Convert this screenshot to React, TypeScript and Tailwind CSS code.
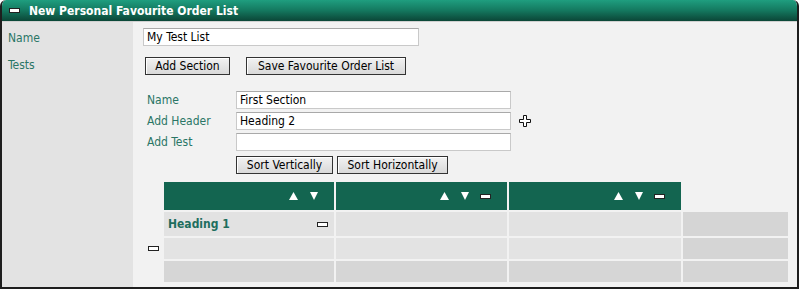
const font = "font-['DejaVu_Sans_Condensed','DejaVu_Sans',sans-serif]";

function MinusBox() {
  return <span className="inline-block h-[5px] w-[11px] border border-[#222] bg-white" />;
}

function Arrows({ minus }: { minus?: boolean }) {
  return (
    <div className="flex items-center pr-[16px]">
      <svg width="9" height="8" viewBox="0 0 9 8">
        <polygon points="4.5,0 9,8 0,8" fill="#fff" />
      </svg>
      <svg width="8" height="8" viewBox="0 0 8 8" className="ml-[12px]">
        <polygon points="0,0 8,0 4,8" fill="#fff" />
      </svg>
      {minus && (
        <span className="ml-[11px] flex">
          <MinusBox />
        </span>
      )}
    </div>
  );
}

function PlusIcon() {
  return (
    <svg width="12" height="12" viewBox="0 0 12 12" className="ml-[8px]">
      <path
        d="M4.5 0.5 H7.5 V4.5 H11.5 V7.5 H7.5 V11.5 H4.5 V7.5 H0.5 V4.5 H4.5 Z"
        fill="#fff"
        stroke="#111"
        strokeWidth="1"
      />
    </svg>
  );
}

function Input({ value, w }: { value: string; w: string }) {
  return (
    <div
      className={`${w} h-[18px] border border-[#c9c9c9] border-t-[#a9a9a9] bg-white pl-[3px] text-[12px] leading-[16px] text-black`}
    >
      {value}
    </div>
  );
}

function Button({ label, w }: { label: string; w: string }) {
  return (
    <div
      className={`${w} flex h-[18px] items-center justify-center border border-[#333] bg-gradient-to-b from-[#f2f2f2] to-[#d9d9d9] text-[12px] text-black shadow-[inset_1px_1px_0_#fff]`}
    >
      {label}
    </div>
  );
}

export default function App() {
  return (
    <div className={`${font} h-[290px] w-[799px] bg-white`}>
      <div className="flex h-[289px] w-[799px] flex-col overflow-hidden rounded-t-[6px] border-x-2 border-b-2 border-[#1e1e1e]">
        {/* title bar */}
        <div className="flex h-[22px] items-center gap-[9px] border-b border-[#d0d0d0] bg-gradient-to-b from-[#1f9e7f] via-[#14785f] to-[#0b4637] pl-[7px]">
          <span className="inline-block h-[5px] w-[11px] border border-[#222] bg-white" />
          <span className="text-[12px] font-bold text-white">New Personal Favourite Order List</span>
        </div>

        <div className="flex flex-1">
          {/* labels column */}
          <div className="w-[131px] bg-[#e3e3e3] pl-[6px] pt-[8px] text-[12px] text-[#2a7666]">
            <div className="h-[27px] leading-[16px]">Name</div>
            <div className="leading-[16px]">Tests</div>
          </div>

          {/* content */}
          <div className="flex-1 bg-[#f2f2f2] pl-[10px] pt-[6px]">
            <Input value="My Test List" w="w-[276px]" />
            <div className="mt-[11px] flex gap-[16px] pl-[2px]">
              <Button label="Add Section" w="w-[85px]" />
              <Button label="Save Favourite Order List" w="w-[160px]" />
            </div>

            <div className="mt-[16px] flex flex-col gap-[3px] pl-[4px] text-[12px] text-[#2a7666]">
              <div className="flex items-center">
                <span className="w-[89px]">Name</span>
                <Input value="First Section" w="w-[275px]" />
              </div>
              <div className="flex items-center">
                <span className="w-[89px]">Add Header</span>
                <Input value="Heading 2" w="w-[275px]" />
                <PlusIcon />
              </div>
              <div className="flex items-center">
                <span className="w-[89px]">Add Test</span>
                <Input value="" w="w-[275px]" />
              </div>
              <div className="mt-[2px] flex gap-[4px] pl-[89px]">
                <Button label="Sort Vertically" w="w-[97px]" />
                <Button label="Sort Horizontally" w="w-[111px]" />
              </div>
            </div>

            <div className="mt-[8px] flex">
              <div className="flex w-[21px] flex-col justify-center pl-[5px]">
                <div className="mt-[33px] flex">
                  <MinusBox />
                </div>
              </div>
              <div className="grid grid-cols-[170px_171px_172px_105px] grid-rows-[28px_24px_21px_21px] gap-[2px]">
                <div className="flex items-center justify-end bg-[#136550]">
                  <Arrows />
                </div>
                <div className="flex items-center justify-end bg-[#136550]">
                  <Arrows minus />
                </div>
                <div className="flex items-center justify-end bg-[#136550]">
                  <Arrows minus />
                </div>
                <div />

                <div className="flex items-center justify-between bg-[#e2e2e2] pl-[4px] pr-[6px]">
                  <span className="text-[12px] font-bold text-[#1e6e5e]">Heading 1</span>
                  <MinusBox />
                </div>
                <div className="bg-[#e2e2e2]" />
                <div className="bg-[#e2e2e2]" />
                <div className="bg-[#d5d5d5]" />

                <div className="bg-[#e3e3e3]" />
                <div className="bg-[#e3e3e3]" />
                <div className="bg-[#e3e3e3]" />
                <div className="bg-[#d5d5d5]" />

                <div className="bg-[#d6d6d6]" />
                <div className="bg-[#d6d6d6]" />
                <div className="bg-[#d6d6d6]" />
                <div className="bg-[#d5d5d5]" />
              </div>
            </div>
          </div>
        </div>
      </div>
    </div>
  );
}
